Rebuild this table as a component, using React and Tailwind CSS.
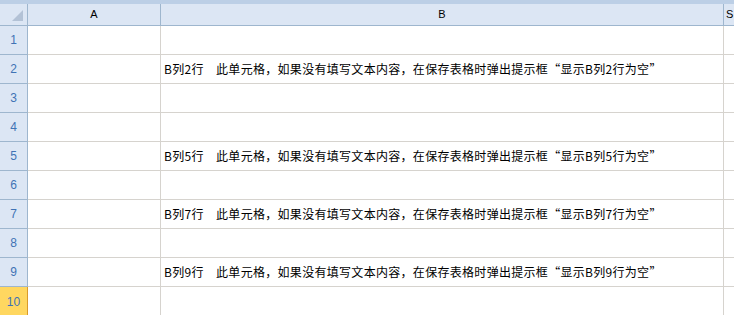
import React from "react";

const rows = [
  { n: 1, text: "" },
  { n: 2, text: "B列2行　此单元格，如果没有填写文本内容，在保存表格时弹出提示框“显示B列2行为空”" },
  { n: 3, text: "" },
  { n: 4, text: "" },
  { n: 5, text: "B列5行　此单元格，如果没有填写文本内容，在保存表格时弹出提示框“显示B列5行为空”" },
  { n: 6, text: "" },
  { n: 7, text: "B列7行　此单元格，如果没有填写文本内容，在保存表格时弹出提示框“显示B列7行为空”" },
  { n: 8, text: "" },
  { n: 9, text: "B列9行　此单元格，如果没有填写文本内容，在保存表格时弹出提示框“显示B列9行为空”" },
  { n: 10, text: "", active: true },
];

const App = () => {
  return (
    <div className="w-[734px] h-[315px] overflow-hidden bg-white font-['Noto_Sans_CJK_SC',sans-serif]">
      {/* top strip */}
      <div className="h-[4px] bg-[#bccfe6]" />

      {/* column headers */}
      <div className="flex h-[22px] bg-[#dce6f4] border-b border-[#9eb6ce] text-[11px] text-black font-['Liberation_Sans',sans-serif]">
        <div className="w-[28px] shrink-0 border-r border-[#9eb6ce] flex items-end justify-end pr-[4px] pb-[4px]">
          <svg width="11" height="11" viewBox="0 0 11 11">
            <polygon points="11,0 11,11 0,11" fill="#b3c2d6" />
          </svg>
        </div>
        <div className="w-[133px] shrink-0 border-r border-[#9eb6ce] flex items-center justify-center">
          A
        </div>
        <div className="w-[563px] shrink-0 border-r border-[#9eb6ce] flex items-center justify-center">
          B
        </div>
        <div className="flex-1 flex items-center pl-[2px]">S</div>
      </div>

      {/* rows */}
      {rows.map((row) => (
        <div key={row.n} className="flex h-[29px] border-b border-[#d6d3ce]">
          <div
            className={
              row.active
                ? "w-[28px] shrink-0 bg-[#ffd760] border-r border-[#d99a2b] -mb-px flex items-center justify-center text-[12px] text-[#3f73b5] font-['Liberation_Sans',sans-serif]"
                : "w-[28px] shrink-0 bg-[#dce6f4] border-r border-[#9eb6ce] -mb-px border-b border-b-[#9eb6ce] flex items-center justify-center text-[12px] text-[#3f73b5] font-['Liberation_Sans',sans-serif]"
            }
          >
            {row.n}
          </div>
          <div className="w-[133px] shrink-0 border-r border-[#d6d3ce]" />
          <div className="w-[563px] shrink-0 border-r border-[#d6d3ce] flex items-center pl-[3px] text-[12px] tracking-[0.3px] text-black whitespace-nowrap overflow-hidden">
            {row.text}
          </div>
          <div className="flex-1" />
        </div>
      ))}
    </div>
  );
};

export default App;
